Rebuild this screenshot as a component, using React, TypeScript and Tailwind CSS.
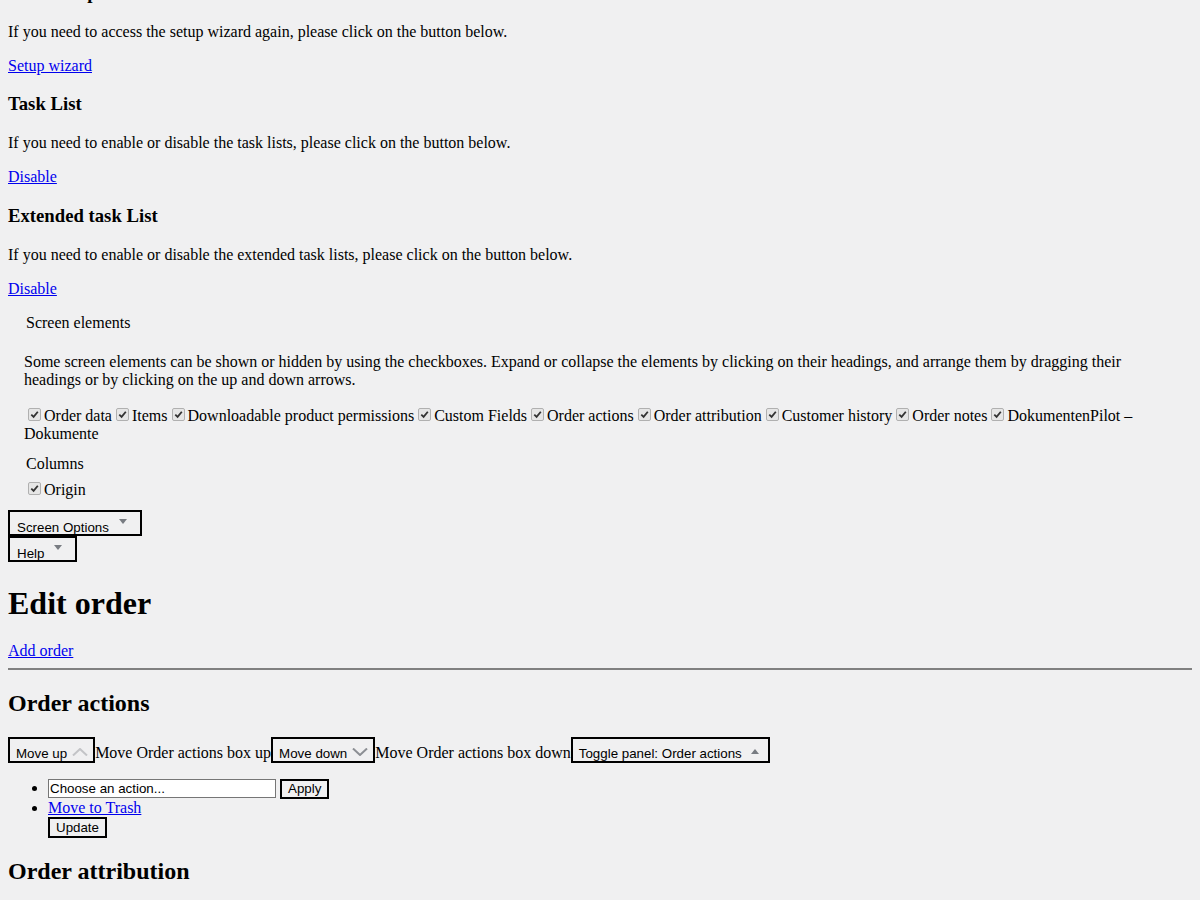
import React from "react";

const sans = "font-['Liberation_Sans',Arial,sans-serif]";

function Tri({ up = false, className = "" }: { up?: boolean; className?: string }) {
  return (
    <svg width="8" height="5" viewBox="0 0 8 5" className={`shrink-0 ${className}`}>
      <path d={up ? "M0 5h8L4 0z" : "M0 0h8L4 5z"} fill="#787c82" />
    </svg>
  );
}

function Chevron({ up = false, color }: { up?: boolean; color: string }) {
  return (
    <svg width="16" height="8" viewBox="0 0 16 8" className="shrink-0 mt-[9px] ml-[5px]">
      <polyline
        points={up ? "1,7.5 8,1 15,7.5" : "1,0.5 8,7 15,0.5"}
        fill="none"
        stroke={color}
        strokeWidth="2"
      />
    </svg>
  );
}

function Check() {
  return (
    <span className="inline-block relative w-[13px] h-[13px] ml-[4px] mr-[3px] mt-[3px] align-baseline rounded-[2px] border border-[#b0b0b0] bg-[#e6e6e6]">
      <svg width="11" height="11" viewBox="0 0 11 11" className="absolute left-0 top-0">
        <polyline points="2.3,5.6 4.6,7.9 8.8,2.8" fill="none" stroke="#333" strokeWidth="1.8" />
      </svg>
    </span>
  );
}

function TabButton({ label }: { label: string }) {
  return (
    <button className={`flex items-start h-[26px] border-2 border-black pl-[7px] pr-[13px] ${sans} text-[13.33px] text-black`}>
      <span className="mt-[8px] leading-[15px] whitespace-nowrap">{label}</span>
      <Tri className="ml-[10px] mt-[7px]" />
    </button>
  );
}

function ToolButton({ children, pr }: { children: React.ReactNode; pr: string }) {
  return (
    <button className={`flex items-start h-[26px] border-2 border-black pl-[6px] ${pr} ${sans} text-[13.33px] text-black`}>
      {children}
    </button>
  );
}

function Btn({ children, tall = false }: { children: React.ReactNode; tall?: boolean }) {
  return (
    <button
      className={`inline-block border-2 border-black px-[6px] py-[1px] ${tall ? "leading-[15px]" : "leading-[14px]"} ${sans} text-[13.33px] text-black`}
    >
      {children}
    </button>
  );
}

const boxes = [
  "Order data",
  "Items",
  "Downloadable product permissions",
  "Custom Fields",
  "Order actions",
  "Order attribution",
  "Customer history",
  "Order notes",
  "DokumentenPilot – Dokumente",
];

export default function App() {
  return (
    <div className="flow-root min-h-screen bg-[#f0f0f1] px-[8px] font-['Liberation_Serif','Times_New_Roman',serif] text-[16px] leading-[normal] text-black">
      <h3 className="-mt-[18px] mb-[18.72px] text-[18.72px] font-bold">Store setup</h3>
      <p className="my-4">If you need to access the setup wizard again, please click on the button below.</p>
      <p className="my-4">
        <a href="#" className="text-[#0000ee] underline">Setup wizard</a>
      </p>

      <h3 className="my-[18.72px] text-[18.72px] font-bold">Task List</h3>
      <p className="my-4">If you need to enable or disable the task lists, please click on the button below.</p>
      <p className="my-4">
        <a href="#" className="text-[#0000ee] underline">Disable</a>
      </p>

      <h3 className="my-[18.72px] text-[18.72px] font-bold">Extended task List</h3>
      <p className="my-4">If you need to enable or disable the extended task lists, please click on the button below.</p>
      <p className="my-4">
        <a href="#" className="text-[#0000ee] underline">Disable</a>
      </p>

      {/* screen options */}
      <div className="mx-[2px] px-[14px] pb-[12px]">
        <div className="pl-[2px]">Screen elements</div>
        <div className="pt-[5.6px]">
          <p className="my-4">
            Some screen elements can be shown or hidden by using the checkboxes. Expand or collapse the elements by clicking on their headings, and arrange them by dragging their headings or by clicking on the up and down arrows.
          </p>
          <div>
            {boxes.map((b) => (
              <label key={b}>
                <Check />
                {b}
              </label>
            ))}
          </div>
        </div>
      </div>
      <div className="mx-[2px] px-[14px] pb-[11px]">
        <div className="pl-[2px]">Columns</div>
        <div className="pt-[5.6px]">
          <label>
            <Check />
            Origin
          </label>
        </div>
      </div>

      <div className="flex flex-col items-start">
        <TabButton label="Screen Options" />
        <TabButton label="Help" />
      </div>

      <h1 className="mt-[23px] mb-[20px] text-[32px] font-bold">Edit order</h1>
      <div>
        <a href="#" className="text-[#0000ee] underline">Add order</a>
      </div>
      <hr className="my-2 border-t-2 border-[#808080]" />

      <h2 className="mt-[20px] mb-[19.92px] text-[24px] font-bold">Order actions</h2>
      <div className="flex items-baseline">
        <ToolButton pr="pr-[5px]">
          <span className="mt-[7px] leading-[15px] whitespace-nowrap">Move up</span>
          <Chevron up color="#c3c4c7" />
        </ToolButton>
        <span className="whitespace-nowrap">Move Order actions box up</span>
        <ToolButton pr="pr-[5px]">
          <span className="mt-[7px] leading-[15px] whitespace-nowrap">Move down</span>
          <Chevron color="#8c8f94" />
        </ToolButton>
        <span className="whitespace-nowrap">Move Order actions box down</span>
        <ToolButton pr="pr-[9px]">
          <span className="mt-[7px] leading-[15px] whitespace-nowrap">Toggle panel: Order actions</span>
          <Tri up className="ml-[9px] mt-[10px]" />
        </ToolButton>
      </div>

      <ul className="my-4 pl-[40px] list-disc">
        <li>
          <span className={`inline-block w-[228px] h-[19px] border border-[#767676] bg-white pl-[1px] pt-[1px] leading-[16px] ${sans} text-[13.33px]`}>
            Choose an action...
          </span>{" "}
          <Btn>Apply</Btn>
        </li>
        <li>
          <a href="#" className="text-[#0000ee] underline">Move to Trash</a>
          <div>
            <Btn tall>Update</Btn>
          </div>
        </li>
      </ul>

      <h2 className="my-[19.92px] text-[24px] font-bold">Order attribution</h2>
      <div className="h-[200px]" />
    </div>
  );
}
